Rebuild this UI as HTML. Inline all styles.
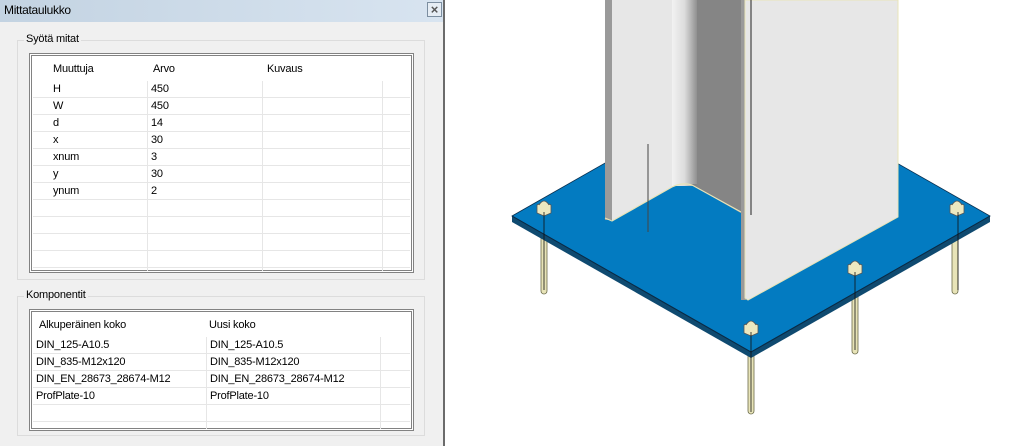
<!DOCTYPE html>
<html><head><meta charset="utf-8"><style>
*{margin:0;padding:0;box-sizing:border-box}
body{width:1030px;height:446px;overflow:hidden;background:#fff;position:relative;font-family:"Liberation Sans",sans-serif;font-size:11px;letter-spacing:-0.2px;color:#000}
.win{position:absolute;left:0;top:0;width:445px;height:446px;background:#f0f0f0;border-right:2px solid #6b6b6b}
.title{position:absolute;left:0;top:0;width:443px;height:22px;background:linear-gradient(90deg,#c3d3e2,#d8e4f0);}
.title span{position:absolute;left:4px;top:3px;font-size:12px;letter-spacing:-0.3px}
.close{position:absolute;left:427px;top:2px;width:15px;height:15px;border:1px solid #7c8ea0;background:#e6edf4;color:#555;font-size:13px;line-height:13px;text-align:center;font-weight:bold}
.grp{position:absolute;border:1px solid #dcdcdc}
.grp .lab{position:absolute;left:6px;top:-8px;background:#f0f0f0;padding:0 2px}
.tbl{position:absolute;background:#fff;border:1px solid #828282;box-shadow:inset 0 0 0 1px #fff,inset 0 0 0 2px #828282}
.row{position:absolute;left:3px;right:3px;height:17px;border-bottom:1px solid #e6e6e6}
.row span,.hd span{position:absolute;top:2px}
.vl{position:absolute;width:1px;background:#e6e6e6}
.hd{position:absolute;left:3px;right:3px;top:3px}
</style></head><body>
<div class="win">
<div class="title"><span>Mittataulukko</span><div class="close">×</div></div>
<div class="grp" style="left:17px;top:40px;width:408px;height:240px"><div class="lab">Syötä mitat</div></div>
<div class="tbl" style="left:29px;top:53px;width:385px;height:220px">
 <div class="vl" style="left:117px;top:3px;height:214px"></div>
 <div class="vl" style="left:232px;top:3px;height:214px"></div>
 <div class="vl" style="left:352px;top:3px;height:214px"></div>
 <div class="hd" style="height:24px;background:#fff"><span style="left:20px;top:6px">Muuttuja</span><span style="left:120px;top:6px">Arvo</span><span style="left:234px;top:6px">Kuvaus</span></div>
 <div class="row" style="top:27px"><span style="left:20px">H</span><span style="left:118px">450</span></div>
 <div class="row" style="top:44px"><span style="left:20px">W</span><span style="left:118px">450</span></div>
 <div class="row" style="top:61px"><span style="left:20px">d</span><span style="left:118px">14</span></div>
 <div class="row" style="top:78px"><span style="left:20px">x</span><span style="left:118px">30</span></div>
 <div class="row" style="top:95px"><span style="left:20px">xnum</span><span style="left:118px">3</span></div>
 <div class="row" style="top:112px"><span style="left:20px">y</span><span style="left:118px">30</span></div>
 <div class="row" style="top:129px"><span style="left:20px">ynum</span><span style="left:118px">2</span></div>
 <div class="row" style="top:146px"></div><div class="row" style="top:163px"></div><div class="row" style="top:180px"></div><div class="row" style="top:197px"></div>
</div>
<div class="grp" style="left:17px;top:296px;width:408px;height:140px"><div class="lab">Komponentit</div></div>
<div class="tbl" style="left:29px;top:309px;width:385px;height:122px">
 <div class="vl" style="left:176px;top:3px;height:116px"></div>
 <div class="vl" style="left:350px;top:3px;height:116px"></div>
 <div class="hd" style="height:24px;background:#fff"><span style="left:6px;top:6px">Alkuperäinen koko</span><span style="left:176px;top:6px">Uusi koko</span></div>
 <div class="row" style="top:27px"><span style="left:3px">DIN_125-A10.5</span><span style="left:177px">DIN_125-A10.5</span></div>
 <div class="row" style="top:44px"><span style="left:3px">DIN_835-M12x120</span><span style="left:177px">DIN_835-M12x120</span></div>
 <div class="row" style="top:61px"><span style="left:3px">DIN_EN_28673_28674-M12</span><span style="left:177px">DIN_EN_28673_28674-M12</span></div>
 <div class="row" style="top:78px"><span style="left:3px">ProfPlate-10</span><span style="left:177px">ProfPlate-10</span></div>
 <div class="row" style="top:95px"></div>
</div>
</div>
<svg style="position:absolute;left:0;top:0" width="1030" height="446">
<defs><linearGradient id="wg" x1="0" x2="1"><stop offset="0" stop-color="#f2f2f2"/><stop offset="0.5" stop-color="#dcdcdc"/><stop offset="1" stop-color="#909090"/></linearGradient></defs>
<g stroke="#6a6a4a" stroke-width="0.8" fill="#e8e4b8">
<rect x="541" y="220" width="6" height="74" rx="3"/>
<rect x="952" y="220" width="6" height="74" rx="3"/>
<rect x="852" y="278" width="6" height="76" rx="3"/>
<rect x="748" y="340" width="6" height="74" rx="3"/>
</g>
<polygon points="512,216 751,80 990,216 990,222 751,358 512,222" fill="#0f4a70"/>
<polygon points="512,216 751,80 990,216 751,352" fill="#037bc1" stroke="#0a3050" stroke-width="0.8"/>
<polyline points="512,216 751,352 990,216" fill="none" stroke="#0a2a44" stroke-width="1"/>
<rect x="605" y="0" width="8" height="220" fill="#9a9a9a"/>
<path d="M612,0 H672 V187 Q680,183 690,184 L741,213 V0 Z" fill="#e7e7e7"/>
<polygon points="612,221 672,187 672,0 612,0" fill="#e7e7e7"/>
<rect x="672" y="0" width="25" height="186" fill="url(#wg)"/>
<path d="M690,184 L741,213 V0 H697 V184 Z" fill="#858585"/>
<path d="M605,218 L612,221 L672,187 Q682,182 692,185 L741,212" fill="none" stroke="#e8e4b8" stroke-width="1.2"/>
<rect x="741" y="0" width="5" height="300" fill="#9a9a9a"/>
<polygon points="745,0 898,0 898,217 748,300 745,298" fill="#e7e7e7" stroke="#e8e4b8" stroke-width="1"/>
<line x1="751" y1="0" x2="751" y2="215" stroke="#222" stroke-width="1"/>
<line x1="648" y1="144" x2="648" y2="232" stroke="#444" stroke-width="1"/>
<g fill="#ece8c0" stroke="#555" stroke-width="0.8">
<path d="M537,205 l7,-3 l7,3 v8 l-7,3 l-7,-3 z"/><path d="M539,205 q5,-8 10,0" />
<path d="M950,205 l7,-3 l7,3 v8 l-7,3 l-7,-3 z"/><path d="M952,205 q5,-8 10,0" />
<path d="M848,265 l7,-3 l7,3 v8 l-7,3 l-7,-3 z"/><path d="M850,265 q5,-8 10,0" />
<path d="M744,325 l7,-3 l7,3 v8 l-7,3 l-7,-3 z"/><path d="M746,325 q5,-8 10,0" />
</g>
<g stroke="#111" stroke-width="0.8"><line x1="544" y1="212" x2="544" y2="290"/><line x1="958" y1="212" x2="958" y2="290"/><line x1="855" y1="272" x2="855" y2="350"/><line x1="751" y1="332" x2="751" y2="412"/></g>
</svg>
</body></html>
